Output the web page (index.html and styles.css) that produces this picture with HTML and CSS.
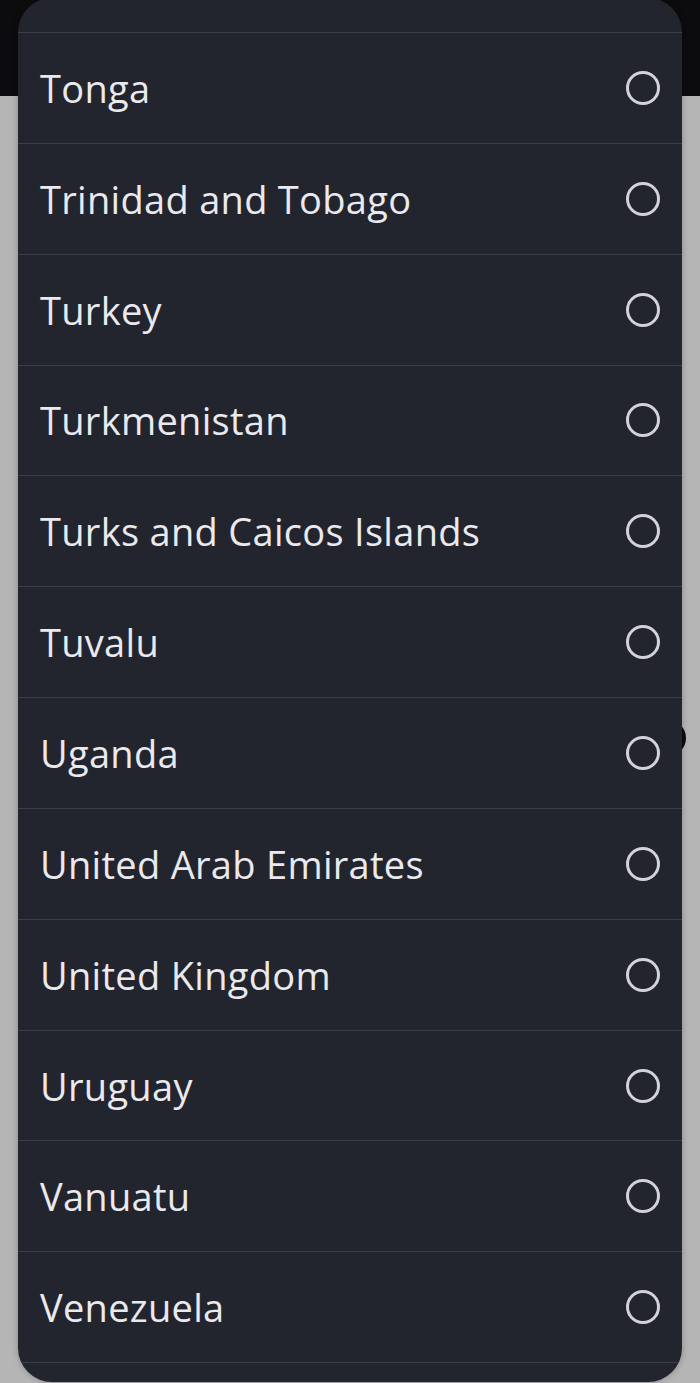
FILE: index.html
```html
<!DOCTYPE html>
<html lang="en">
<head>
    <meta charset="UTF-8">
    <meta name="viewport" content="width=device-width, initial-scale=1.0">
    <title>Select country</title>
    <link rel="stylesheet" href="styles.css">
</head>
<body>
    <div class="screen">
        <div class="topbar"></div>
        <div class="fab"></div>
    </div>

    <div class="dialog">
        <ul class="list">
            <li class="item"><span>Tonga</span><i class="radio"></i></li>
            <li class="item"><span>Trinidad and Tobago</span><i class="radio"></i></li>
            <li class="item"><span>Turkey</span><i class="radio"></i></li>
            <li class="item"><span>Turkmenistan</span><i class="radio"></i></li>
            <li class="item"><span>Turks and Caicos Islands</span><i class="radio"></i></li>
            <li class="item"><span>Tuvalu</span><i class="radio"></i></li>
            <li class="item"><span>Uganda</span><i class="radio"></i></li>
            <li class="item"><span>United Arab Emirates</span><i class="radio"></i></li>
            <li class="item"><span>United Kingdom</span><i class="radio"></i></li>
            <li class="item"><span>Uruguay</span><i class="radio"></i></li>
            <li class="item"><span>Vanuatu</span><i class="radio"></i></li>
            <li class="item"><span>Venezuela</span><i class="radio"></i></li>
        </ul>
    </div>
</body>
</html>
```

FILE: styles.css
```css
* {
    margin: 0;
    padding: 0;
    box-sizing: border-box;
}

body {
    width: 700px;
    height: 1383px;
    overflow: hidden;
    background: #b5b5b5;
    font-family: "Open Sans", "Noto Sans", sans-serif;
}

.screen {
    position: relative;
    height: 100%;
}

.topbar {
    height: 96px;
    background: #0c0c0e;
}

.fab {
    position: absolute;
    left: 650px;
    top: 720px;
    width: 36px;
    height: 36px;
    border-radius: 50%;
    background: #0c0c0e;
}

.dialog {
    position: absolute;
    left: 18px;
    top: -2px;
    width: 664px;
    height: 1384px;
    border-radius: 34px;
    background: #23252e;
    box-shadow: 0 0 6px rgba(0, 0, 0, 0.25);
    overflow: hidden;
    padding-top: 34px;
}

.list {
    list-style: none;
    border-top: 1.5px solid #3b3d47;
}

.item {
    display: flex;
    align-items: center;
    justify-content: space-between;
    height: 110.85px;
    padding: 0 22px 0 22px;
    border-bottom: 1.5px solid #3b3d47;
    color: #e9e9ee;
    font-size: 38px;
    letter-spacing: 0.3px;
}

.item span {
    margin-top: 0;
}

.radio {
    width: 34px;
    height: 34px;
    border: 3px solid #d2d3d9;
    border-radius: 50%;
    margin-top: 0;
}
```
